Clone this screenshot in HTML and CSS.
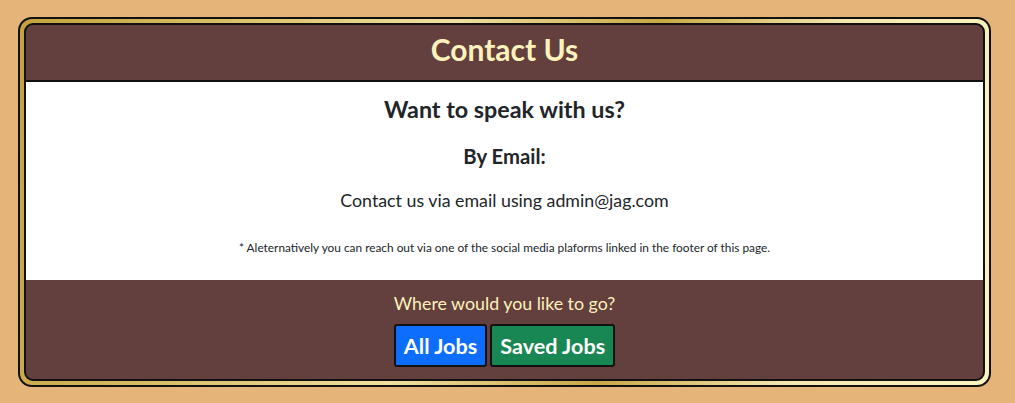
FILE: index.html
```html
<!DOCTYPE html>
<html lang="en">
<head>
<meta charset="utf-8">
<title>Contact Us</title>
<link rel="stylesheet" href="styles.css">
</head>
<body>
<div class="frame">
  <div class="card">
    <header class="card-header">
      <h1 class="title">Contact Us</h1>
    </header>
    <section class="card-body">
      <h2 class="lead">Want to speak with us?</h2>
      <h3 class="sub">By Email:</h3>
      <p class="text">Contact us via email using admin@jag.com</p>
      <p class="note">* Aleternatively you can reach out via one of the social media plaforms linked in the footer of this page.</p>
    </section>
    <footer class="card-footer">
      <p class="question">Where would you like to go?</p>
      <div class="buttons">
        <a class="btn btn-blue" href="#">All Jobs</a>
        <a class="btn btn-green" href="#">Saved Jobs</a>
      </div>
    </footer>
  </div>
</div>
</body>
</html>
```
FILE: styles.css
```css
html, body {
  margin: 0;
  padding: 0;
}
body {
  background: #e5b479;
  font-family: Lato, "Open Sans", sans-serif;
  padding: 17px 24px 17px 18px;
  height: 403px;
  box-sizing: border-box;
}
.frame {
  border: 2px solid #111;
  border-radius: 14px;
  padding: 4px;
  background: linear-gradient(100deg, #c4a13e 0%, #d9bf68 20%, #efe0a0 42%, #c9a746 62%, #f3e7ae 80%, #fbf4c0 100%);
}
.card {
  border: 2px solid #111;
  border-radius: 9px;
  overflow: hidden;
  background: #633f3d;
}
.card-header {
  height: 57px;
  display: flex;
  align-items: center;
  justify-content: center;
  border-bottom: 2px solid #111;
  box-sizing: border-box;
  padding-bottom: 8px;
}
.title {
  margin: 0;
  font-size: 30px;
  font-weight: 700;
  color: #fef2bc;
  line-height: 1;
}
.card-body {
  background: #fff;
  height: 198px;
  display: flex;
  flex-direction: column;
  align-items: center;
  color: #212529;
  box-sizing: border-box;
  padding-top: 14px;
}
.lead {
  margin: 0;
  font-size: 23.3px;
  font-weight: 700;
  line-height: 26px;
}
.sub {
  margin: 23px 0 0;
  font-size: 20.3px;
  font-weight: 700;
  line-height: 22px;
}
.text {
  margin: 22px 0 0;
  font-size: 17.8px;
  line-height: 22px;
}
.note {
  margin: 30px 0 0;
  font-size: 11.85px;
  line-height: 14px;
}
.card-footer {
  height: 99px;
  display: flex;
  flex-direction: column;
  align-items: center;
  padding-top: 12px;
  box-sizing: border-box;
}
.question {
  margin: 0;
  color: #fef2bc;
  font-size: 17.8px;
  line-height: 22px;
}
.buttons {
  display: flex;
  gap: 3px;
  margin-top: 10px;
}
.btn {
  display: flex;
  align-items: center;
  height: 43px;
  box-sizing: border-box;
  padding: 0 8px;
  border: 2px solid #111;
  border-radius: 3px;
  color: #fff;
  text-decoration: none;
  font-size: 21.6px;
  font-weight: 700;
}
.btn-blue {
  background: #0d6efd;
}
.btn-green {
  background: #198754;
}
```
